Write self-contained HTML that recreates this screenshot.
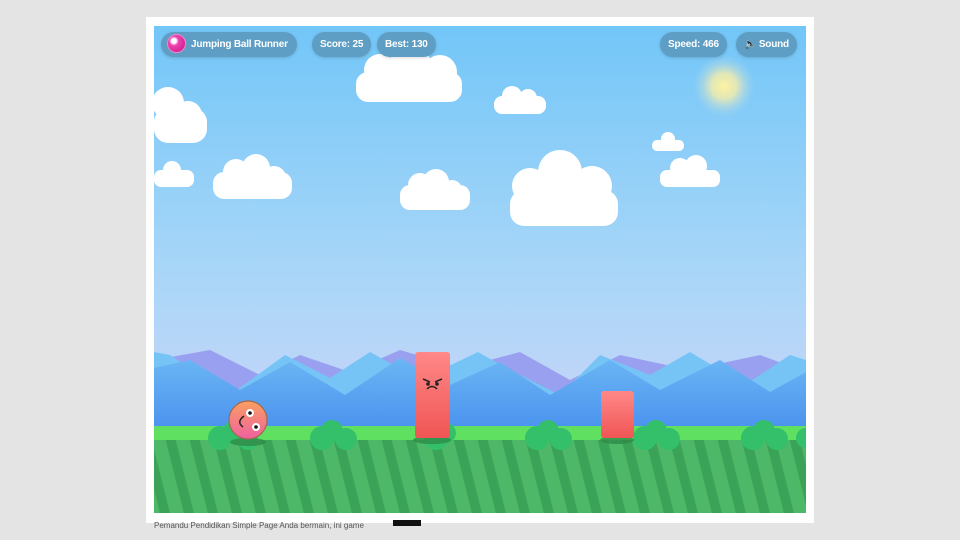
<!DOCTYPE html>
<html><head><meta charset="utf-8"><style>
body{margin:0;width:960px;height:540px;overflow:hidden;background:#e4e4e4;font-family:"Liberation Sans",sans-serif}
.pill{position:absolute;top:32px;height:25px;border-radius:13px;background:#5e9ec4;color:#fff;font-weight:bold;font-size:10px;line-height:25px;padding:0 8px;white-space:nowrap;box-shadow:0 1px 3px rgba(0,0,0,.15);letter-spacing:-0.2px}
</style></head><body>
<svg width="960" height="540" style="position:absolute;left:0;top:0">
<defs>
<linearGradient id="sky" x1="0" y1="0" x2="0" y2="1"><stop offset="0" stop-color="#72c6f8"/><stop offset="0.5" stop-color="#a8d6f8"/><stop offset="1" stop-color="#d8d4f8"/></linearGradient>
<linearGradient id="mt" x1="0" y1="0" x2="0" y2="1"><stop offset="0" stop-color="#6bb6f4"/><stop offset="1" stop-color="#4a92ee"/></linearGradient>
<linearGradient id="ob" x1="0" y1="0" x2="0" y2="1"><stop offset="0" stop-color="#ff8888"/><stop offset="1" stop-color="#f05555"/></linearGradient>
<linearGradient id="ball" x1="0" y1="0" x2="0" y2="1"><stop offset="0" stop-color="#f8a060"/><stop offset="1" stop-color="#f060a0"/></linearGradient>
<radialGradient id="sun"><stop offset="0" stop-color="#fff2a0"/><stop offset="0.4" stop-color="#f8eea8" stop-opacity=".8"/><stop offset="1" stop-color="#a0d4f8" stop-opacity="0"/></radialGradient>
<clipPath id="c"><rect x="154" y="26" width="652" height="487"/></clipPath>
<pattern id="st" width="24" height="80" patternUnits="userSpaceOnUse" patternTransform="skewX(14)"><rect width="24" height="80" fill="#4cb868"/><rect x="8" width="10" height="80" fill="#3aa358"/></pattern>
</defs>
<rect x="146" y="17" width="668" height="506" fill="#fff"/>
<g clip-path="url(#c)">
<rect x="154" y="26" width="652" height="487" fill="url(#sky)"/>
<circle cx="724" cy="86" r="32" fill="url(#sun)"/>
<g fill="#fff">
<rect x="356" y="72" width="106" height="30" rx="12"/><circle cx="380" cy="70" r="16"/><circle cx="410" cy="62" r="20"/><circle cx="440" cy="72" r="17"/>
<rect x="494" y="96" width="52" height="18" rx="8"/><circle cx="512" cy="96" r="10"/><circle cx="528" cy="98" r="9"/>
<rect x="154" y="108" width="53" height="35" rx="14"/><circle cx="168" cy="103" r="16"/><circle cx="188" cy="115" r="14"/>
<rect x="154" y="170" width="40" height="17" rx="7"/><circle cx="172" cy="170" r="9"/>
<rect x="213" y="172" width="79" height="27" rx="11"/><circle cx="236" cy="172" r="13"/><circle cx="256" cy="168" r="14"/><circle cx="274" cy="178" r="12"/>
<rect x="400" y="185" width="70" height="25" rx="10"/><circle cx="420" cy="185" r="12"/><circle cx="436" cy="182" r="13"/><circle cx="452" cy="190" r="10"/>
<rect x="510" y="190" width="108" height="36" rx="14"/><circle cx="530" cy="186" r="18"/><circle cx="560" cy="172" r="22"/><circle cx="592" cy="186" r="20"/>
<rect x="652" y="140" width="32" height="11" rx="5"/><circle cx="668" cy="139" r="7"/>
<rect x="660" y="170" width="60" height="17" rx="7"/><circle cx="680" cy="168" r="10"/><circle cx="696" cy="166" r="11"/>
</g>
<path d="M154 360 L210 350 L260 375 L300 355 L350 372 L400 350 L460 368 L520 352 L570 380 L620 355 L690 370 L760 355 L806 372 V430 H154Z" fill="#9aa0f0"/>
<path d="M154 352 L170 355 L230 395 L285 355 L330 378 L370 352 L420 380 L478 352 L510 370 L560 395 L600 355 L650 375 L690 352 L745 385 L790 355 L806 360 V430 H154Z" fill="#76c4f6"/>
<path d="M154 368 L190 360 L240 390 L290 362 L345 395 L400 358 L450 385 L500 362 L550 395 L610 360 L660 390 L720 360 L770 392 L806 372 V430 H154Z" fill="url(#mt)"/>
<rect x="154" y="426" width="652" height="14" fill="#60e060"/>
<rect x="154" y="440" width="652" height="73" fill="url(#st)"/>
<g fill="#34c06a">
<circle cx="220" cy="438" r="12"/><circle cx="235" cy="432" r="12"/><circle cx="248" cy="440" r="10"/>
<circle cx="322" cy="438" r="12"/><circle cx="332" cy="431" r="11"/><circle cx="346" cy="439" r="11"/>
<circle cx="436" cy="438" r="12"/><circle cx="446" cy="433" r="10"/>
<circle cx="537" cy="438" r="12"/><circle cx="548" cy="431" r="11"/><circle cx="561" cy="439" r="11"/>
<circle cx="645" cy="438" r="12"/><circle cx="656" cy="431" r="11"/><circle cx="669" cy="439" r="11"/>
<circle cx="753" cy="438" r="12"/><circle cx="764" cy="431" r="11"/><circle cx="777" cy="439" r="11"/>
<circle cx="806" cy="438" r="10"/>
</g>
<ellipse cx="248" cy="442" rx="18" ry="4" fill="#2e8a48" opacity=".8"/>
<ellipse cx="432" cy="440" rx="19" ry="4" fill="#2e8a48" opacity=".8"/>
<ellipse cx="617" cy="440" rx="17" ry="4" fill="#2e8a48" opacity=".8"/>
<rect x="415" y="352" width="35" height="86" rx="3" fill="url(#ob)"/>
<rect x="601" y="391" width="33" height="47" rx="3" fill="url(#ob)"/>
<g stroke="#222" stroke-width="1.5" fill="none"><path d="M423 379 L430 382 M442 379 L435 382"/><path d="M427 389 Q432 384 437 389"/></g>
<circle cx="428" cy="384" r="1.8" fill="#222"/><circle cx="437" cy="384" r="1.8" fill="#222"/>
<circle cx="248" cy="420" r="19" fill="url(#ball)" stroke="#a06a50" stroke-width="1.2"/>
<path d="M244 416 Q236 422 243 427" stroke="#222" stroke-width="1.5" fill="none"/>
<circle cx="250" cy="413" r="4" fill="#fff"/><circle cx="250" cy="413" r="1.8" fill="#111"/>
<circle cx="256" cy="427" r="4" fill="#fff"/><circle cx="256" cy="427" r="1.8" fill="#111"/>
</g>
<rect x="393" y="520" width="28" height="6" fill="#111"/>
<text x="154" y="528" font-size="8" fill="#555" font-family="Liberation Sans">Pemandu Pendidikan Simple Page Anda bermain, ini game</text>
</svg>
<div class="pill" style="left:161px;padding-left:6px;padding-right:9px"><span style="display:inline-block;width:17px;height:17px;border-radius:50%;background:radial-gradient(circle at 35% 35%,#fff 0 15%,#f040b0 30%,#c01880);vertical-align:middle;margin-right:5px;margin-top:-2px;border:1px solid #e8c"></span>Jumping Ball Runner</div>
<div class="pill" style="left:312px">Score: 25</div>
<div class="pill" style="left:377px">Best: 130</div>
<div class="pill" style="left:660px">Speed: 466</div>
<div class="pill" style="left:736px">🔈 Sound</div>
</body></html>
